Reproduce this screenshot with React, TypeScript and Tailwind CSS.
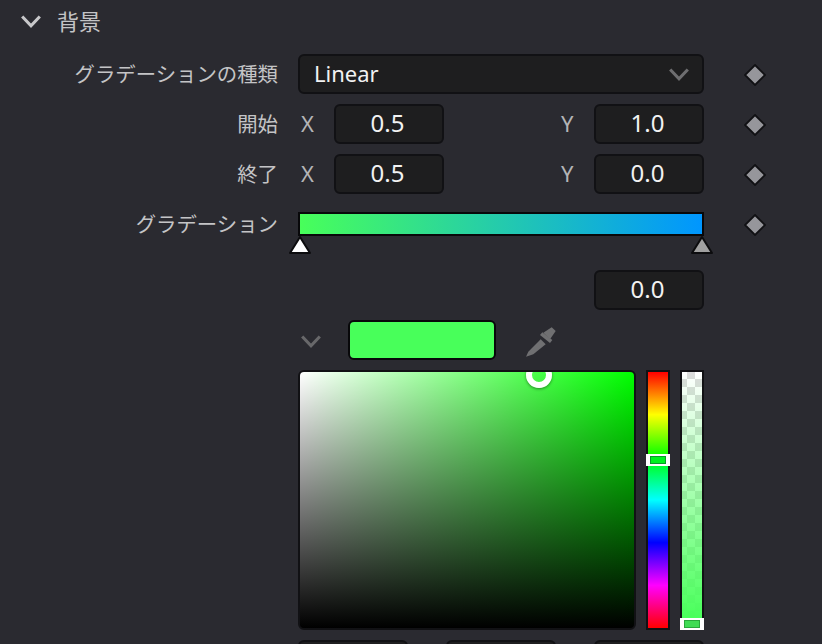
const font = "font-['Noto_Sans','Noto_Sans_CJK_JP',sans-serif]";

function Diamond() {
  return (
    <svg width="22" height="22" viewBox="0 0 22 22" className="ml-10 mt-0.5 shrink-0">
      <path d="M11 1 L21 11 L11 21 L1 11 Z" fill="#96969b" stroke="#111114" strokeWidth="1.8" />
    </svg>
  );
}

function Chevron({ className, size }: { className: string; size: number }) {
  return (
    <svg width={size} height={size} viewBox="0 0 20 20" fill="none" className={className}>
      <path d="M2 5 L10 13.5 L18 5" stroke="currentColor" strokeWidth="2.8" />
    </svg>
  );
}

function NumField({ value }: { value: string }) {
  return (
    <div className="flex h-10 w-[110px] items-center justify-center rounded-md border-2 border-[#111114] bg-[#1e1e1f] pb-0.5 pr-[3px] text-[24px] text-[#f2f2f2]">
      {value}
    </div>
  );
}

function Row({ label, children, diamond = true }: { label?: string; children: React.ReactNode; diamond?: boolean }) {
  return (
    <div className="flex items-center">
      <div className="w-[278px] shrink-0 text-right text-[20.4px] leading-none text-[#c4c4c6]">{label}</div>
      <div className="ml-5 w-[406px] shrink-0">{children}</div>
      {diamond && <Diamond />}
    </div>
  );
}

function XYRow({ label, x, y }: { label: string; x: string; y: string }) {
  return (
    <Row label={label}>
      <div className="flex items-center text-[22px] text-[#b4b4b6]">
        <span className="w-9 pb-0.5 pl-[3px]">X</span>
        <NumField value={x} />
        <span className="ml-[117px] w-[33px] pb-0.5">Y</span>
        <NumField value={y} />
      </div>
    </Row>
  );
}

function ColorPicker() {
  return (
    <div className="flex h-[260px] gap-2.5">
      <div className="relative w-[338px] overflow-hidden rounded-md border-2 border-[#111114] bg-[linear-gradient(to_top,#000,transparent),linear-gradient(to_right,#fff,#00ff00)]">
        <div className="absolute -top-[10px] left-[226px] h-[26px] w-[26px] rounded-full border-[6px] border-white shadow-[0_1px_3px_rgba(0,0,0,0.45)]" />
      </div>
      <div className="relative w-6 border-2 border-[#111114] bg-[linear-gradient(to_bottom,#f00,#ff0,#0f0,#0ff,#00f,#f0f,#f00)]">
        <div className="absolute -left-0.5 top-[82px] h-3 w-6 border-x-4 border-y-2 border-white bg-[#00f020] shadow-[inset_0_0_0_1px_#0a9a28]" />
      </div>
      <div className="relative w-6 border-2 border-[#111114] bg-[linear-gradient(to_bottom,rgba(72,255,90,0),#48ff5a_97%),repeating-conic-gradient(#dcdcdc_0_25%,#fff_0_50%)] bg-[size:100%_100%,16px_16px] bg-[position:0_0,-3px_-1px]">
        <div className="absolute -bottom-0.5 -left-0.5 h-3 w-6 border-x-4 border-y-2 border-white bg-[#40dc54] shadow-[inset_0_0_0_1px_#2aa83c]" />
      </div>
    </div>
  );
}

export default function App() {
  return (
    <div className={`h-[644px] w-[822px] overflow-hidden bg-[#2a2a30] ${font}`}>
      <div className="flex h-11 items-center pl-5 text-[#c4c4c6]">
        <Chevron size={22} className="text-[#c8c8ca]" />
        <span className="ml-[15px] pb-0.5 text-[22px]">背景</span>
      </div>
      <div className="mt-2.5 flex flex-col gap-2.5">
        <Row label="グラデーションの種類">
          <div className="flex h-10 items-center justify-between rounded-md border-2 border-[#111114] bg-[#1e1e1f] pl-3.5 pr-3 text-[22px] text-[#f2f2f2]">
            <span className="pb-0.5">Linear</span>
            <Chevron size={22} className="mt-px text-[#6e6e70]" />
          </div>
        </Row>
        <XYRow label="開始" x="0.5" y="1.0" />
        <XYRow label="終了" x="0.5" y="0.0" />
        <Row label="グラデーション">
          <div className="relative h-10 py-2">
            <div className="h-6 border-2 border-[#08080a] bg-[linear-gradient(to_right,#48ff5a,#0096ff)]" />
            <svg width="24" height="20" viewBox="0 0 24 20" className="absolute -left-2.5 top-[31px]">
              <path d="M12 2 L22 18 L2 18 Z" fill="#fff" stroke="#0c0c0e" strokeWidth="2" strokeLinejoin="round" />
            </svg>
            <svg width="24" height="20" viewBox="0 0 24 20" className="absolute -right-2.5 top-[31px]">
              <path d="M12 2 L22 18 L2 18 Z" fill="#a0a0a0" stroke="#0c0c0e" strokeWidth="2" strokeLinejoin="round" />
            </svg>
          </div>
        </Row>
        <div className="mt-4">
          <Row diamond={false}>
            <div className="flex justify-end">
              <NumField value="0.0" />
            </div>
          </Row>
        </div>
        <Row diamond={false}>
          <div className="flex h-10 items-center">
            <Chevron size={22} className="ml-0.5 mt-1 text-[#68686a]" />
            <div className="ml-[26px] h-10 w-[148px] rounded-md border-2 border-[#08080a] bg-[#48ff5a]" />
            <svg width="36" height="36" viewBox="0 0 36 36" className="ml-[29px]" fill="#707072">
              <path d="M1 34.7 L3.3 29.7 L15.7 17.3 L20.7 22.3 L8.3 32.3 Z" />
              <path d="M15 13 L17.3 10.3 L27.3 18 L25 21 Z" />
              <path d="M18.3 10.7 L26.7 5.3 L30.7 9 L25 17.3 Z" />
            </svg>
          </div>
        </Row>
        <Row diamond={false}>
          <ColorPicker />
        </Row>
        <Row diamond={false}>
          <div className="flex justify-between">
            <NumField value="" />
            <NumField value="" />
            <NumField value="" />
          </div>
        </Row>
      </div>
    </div>
  );
}
